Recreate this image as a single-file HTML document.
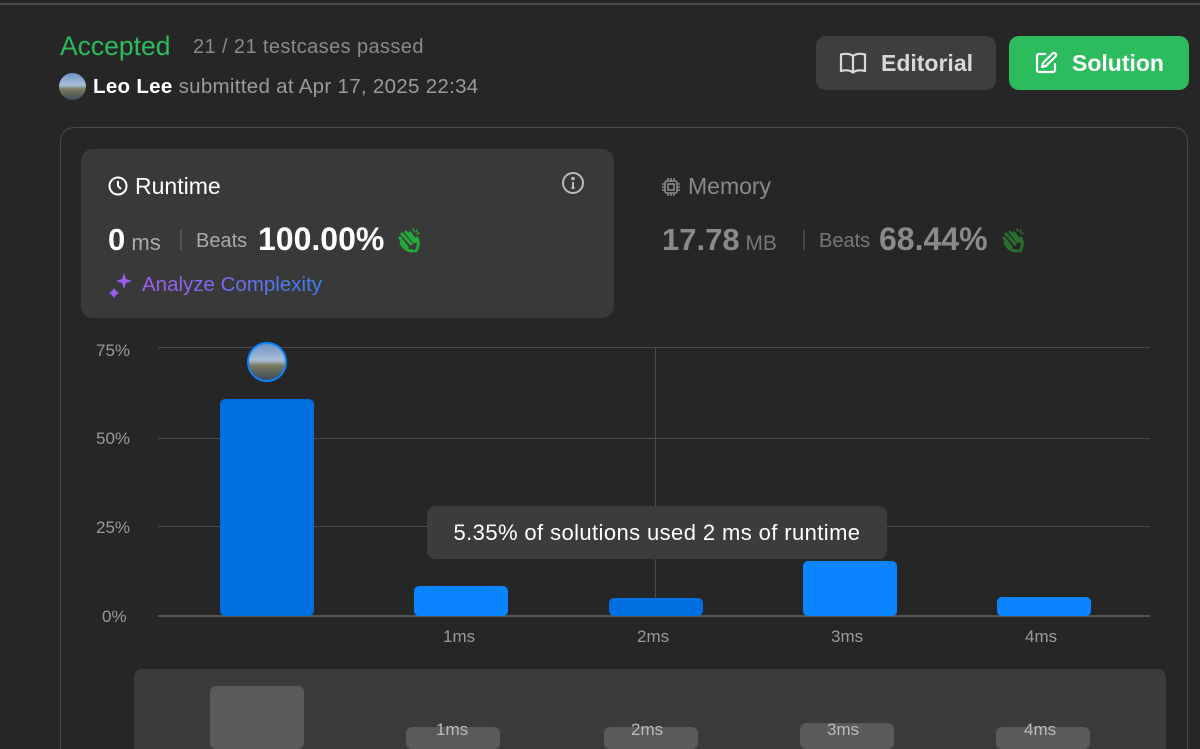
<!DOCTYPE html>
<html style="width:1200px;height:749px;overflow:hidden"><head><meta charset="utf-8"><style>
*{margin:0;padding:0;box-sizing:border-box}
body{width:1200px;height:749px;background:#262626;font-family:"Liberation Sans",sans-serif;position:relative;overflow:hidden;color:#eee}
#w{position:absolute;left:0;top:0;width:1200px;height:749px;overflow:hidden}
.a{position:absolute}
</style></head><body><div id="w">
<div class="a" style="left:0;top:3px;width:1200px;height:2px;background:#4a4a4a"></div>
<div class="a" style="left:60px;top:31px;font-size:26.5px;color:#2cbb5d">Accepted</div>
<div class="a" style="left:193px;top:36px;font-size:20px;color:#8a8a8a;letter-spacing:.4px">21 / 21 testcases passed</div>
<div class="a" style="left:59px;top:73px;width:27px;height:27px;border-radius:50%;background:linear-gradient(#6f93c4 0,#a9bfd8 45%,#7a7a5e 60%,#3d4a5a 100%)"></div>
<div class="a" style="left:93px;top:75px;font-size:20.5px;color:#9a9a9a;letter-spacing:.3px"><b style="color:#fff">Leo Lee</b> submitted at Apr 17, 2025 22:34</div>

<div class="a" style="left:816px;top:36px;width:180px;height:54px;border-radius:10px;background:#3e3e3e;color:#d8d8d8;font-size:23px;font-weight:bold;display:flex;align-items:center;justify-content:center;gap:14px">
<svg width="28" height="24" viewBox="0 0 28 24" fill="none" stroke="#d8d8d8" stroke-width="2.2" stroke-linejoin="round"><path d="M14 5C11 2.5 6 2.5 2 3.5V20C6 19 11 19 14 21.5 17 19 22 19 26 20V3.5C22 2.5 17 2.5 14 5ZM14 5V21.5"/></svg>Editorial</div>
<div class="a" style="left:1009px;top:36px;width:180px;height:54px;border-radius:10px;background:#2cbb5d;color:#fff;font-size:23px;font-weight:bold;display:flex;align-items:center;justify-content:center;gap:14px">
<svg width="24" height="24" viewBox="0 0 24 24" fill="none" stroke="#fff" stroke-width="2.2" stroke-linecap="round" stroke-linejoin="round"><path d="M11 3H5a2 2 0 0 0-2 2v14a2 2 0 0 0 2 2h14a2 2 0 0 0 2-2v-6"/><path d="M18.5 2.5a2.1 2.1 0 0 1 3 3L12 15l-4 1 1-4z"/></svg>Solution</div>

<div class="a" style="left:60px;top:127px;width:1128px;height:700px;border:1.5px solid #4a4a4a;border-radius:14px"></div>
<div class="a" style="left:81px;top:149px;width:533px;height:169px;border-radius:12px;background:#393939"></div>
<svg class="a" style="left:108px;top:176px" width="20" height="20" viewBox="0 0 20 20" fill="none" stroke="#fff" stroke-width="2"><circle cx="10" cy="10" r="8.5"/><path d="M10 5v5l3 3"/></svg>
<div class="a" style="left:135px;top:173px;font-size:23px;color:#fff">Runtime</div>
<svg class="a" style="left:561px;top:171px" width="24" height="24" viewBox="0 0 24 24" fill="none" stroke="#bbb" stroke-width="2"><circle cx="12" cy="12" r="10"/><path d="M12 11v6M10.5 17h3"/><circle cx="12" cy="7.5" r=".8" fill="#bbb"/></svg>
<div class="a" style="left:108px;top:222px;font-size:31px;font-weight:bold;color:#fff">0<span style="font-size:22px;font-weight:normal;color:#aaa"> ms</span></div>
<div class="a" style="left:180px;top:230px;width:2px;height:20px;background:#555"></div>
<div class="a" style="left:196px;top:230px;font-size:20px;color:#aaa">Beats</div>
<div class="a" style="left:258px;top:221px;font-size:32px;font-weight:bold;color:#fff">100.00%</div>
<svg class="a" style="left:397px;top:228px" width="24" height="26" viewBox="0 0 24 26" fill="none" stroke="#22a838" stroke-width="3" stroke-linecap="round"><path d="M3 10l7 9M5 6l9 10M9 4l8 10M13 5l6 8M4 15q4 8 12 8M20 10q3 6-1 13"/><path d="M16 1l1 2M20 2l-1 2M22 5l-2 1" stroke-width="1.5"/></svg>
<svg class="a" style="left:108px;top:272px" width="26" height="26" viewBox="0 0 26 26" fill="#9b5cf0"><path d="M16 1l2 6 6 2-6 2-2 6-2-6-6-2 6-2z"/><path d="M6 16l2 3 3 2-3 2-2 3-2-3-3-2 3-2z"/></svg>
<div class="a" style="left:142px;top:273px;font-size:20.5px;background:linear-gradient(90deg,#a55df0,#3c7df0);-webkit-background-clip:text;color:transparent">Analyze Complexity</div>

<svg class="a" style="left:661px;top:177px" width="20" height="20" viewBox="0 0 20 20" fill="none" stroke="#8a8a8a" stroke-width="1.6"><rect x="4" y="4" width="12" height="12" rx="2"/><rect x="7" y="7" width="6" height="6"/><path d="M7 1v3M10 1v3M13 1v3M7 16v3M10 16v3M13 16v3M1 7h3M1 10h3M1 13h3M16 7h3M16 10h3M16 13h3"/></svg>
<div class="a" style="left:688px;top:173px;font-size:23px;color:#8a8a8a">Memory</div>
<div class="a" style="left:662px;top:222px;font-size:31px;font-weight:bold;color:#8a8a8a">17.78<span style="font-size:21px;font-weight:normal;color:#777"> MB</span></div>
<div class="a" style="left:803px;top:230px;width:2px;height:20px;background:#444"></div>
<div class="a" style="left:819px;top:230px;font-size:20px;color:#777">Beats</div>
<div class="a" style="left:879px;top:221px;font-size:32px;font-weight:bold;color:#8a8a8a">68.44%</div>
<svg class="a" style="left:1001px;top:228px" width="24" height="26" viewBox="0 0 24 26" fill="none" stroke="#2a6e30" stroke-width="3" stroke-linecap="round"><path d="M3 10l7 9M5 6l9 10M9 4l8 10M13 5l6 8M4 15q4 8 12 8M20 10q3 6-1 13"/><path d="M16 1l1 2M20 2l-1 2M22 5l-2 1" stroke-width="1.5"/></svg>

<svg class="a" style="left:0;top:330px" width="1200" height="320" font-family="Liberation Sans" font-size="17" fill="#9a9a9a">
<g stroke="#4a4a4a" stroke-width="1"><line x1="158" y1="17.5" x2="1150" y2="17.5"/><line x1="158" y1="108.5" x2="1150" y2="108.5"/><line x1="158" y1="196.5" x2="1150" y2="196.5"/><line x1="655.5" y1="17" x2="655.5" y2="286"/></g>
<line x1="158" y1="286" x2="1150" y2="286" stroke="#555" stroke-width="2"/>
<text x="96" y="26">75%</text><text x="96" y="114">50%</text><text x="96" y="203">25%</text><text x="102" y="292">0%</text>
<g fill="#0a84ff"><rect x="220" y="69" width="94" height="217" rx="5" fill="#0070e0"/><rect x="414" y="256" width="94" height="30" rx="5"/><rect x="609" y="268" width="94" height="18" rx="5" fill="#0070e0"/><rect x="803" y="231" width="94" height="55" rx="5"/><rect x="997" y="267" width="94" height="19" rx="5"/></g>
<text x="443" y="312">1ms</text><text x="637" y="312">2ms</text><text x="831" y="312">3ms</text><text x="1025" y="312">4ms</text>
</svg>
<div class="a" style="left:247px;top:342px;width:40px;height:40px;border-radius:50%;border:2.5px solid #0a84ff;background:linear-gradient(#6f93c4 0,#a9bfd8 45%,#7a7a5e 60%,#3d4a5a 100%)"></div>
<div class="a" style="left:427px;top:506px;width:460px;height:53px;border-radius:8px;background:#3c3c3c;color:#fff;font-size:22px;letter-spacing:.4px;display:flex;align-items:center;justify-content:center">5.35% of solutions used 2 ms of runtime</div>

<div class="a" style="left:134px;top:669px;width:1032px;height:90px;border-radius:8px;background:#3b3b3b"></div>
<svg class="a" style="left:134px;top:669px" width="1032" height="80" font-family="Liberation Sans" font-size="17" fill="#bbb">
<g fill="#5a5a5a"><rect x="76" y="17" width="94" height="63" rx="6"/><rect x="272" y="58" width="94" height="22" rx="6"/><rect x="470" y="58" width="94" height="22" rx="6"/><rect x="666" y="54" width="94" height="26" rx="6"/><rect x="862" y="58" width="94" height="22" rx="6"/></g>
<text x="302" y="66">1ms</text><text x="497" y="66">2ms</text><text x="693" y="66">3ms</text><text x="890" y="66">4ms</text>
</svg>
</div></body></html>
